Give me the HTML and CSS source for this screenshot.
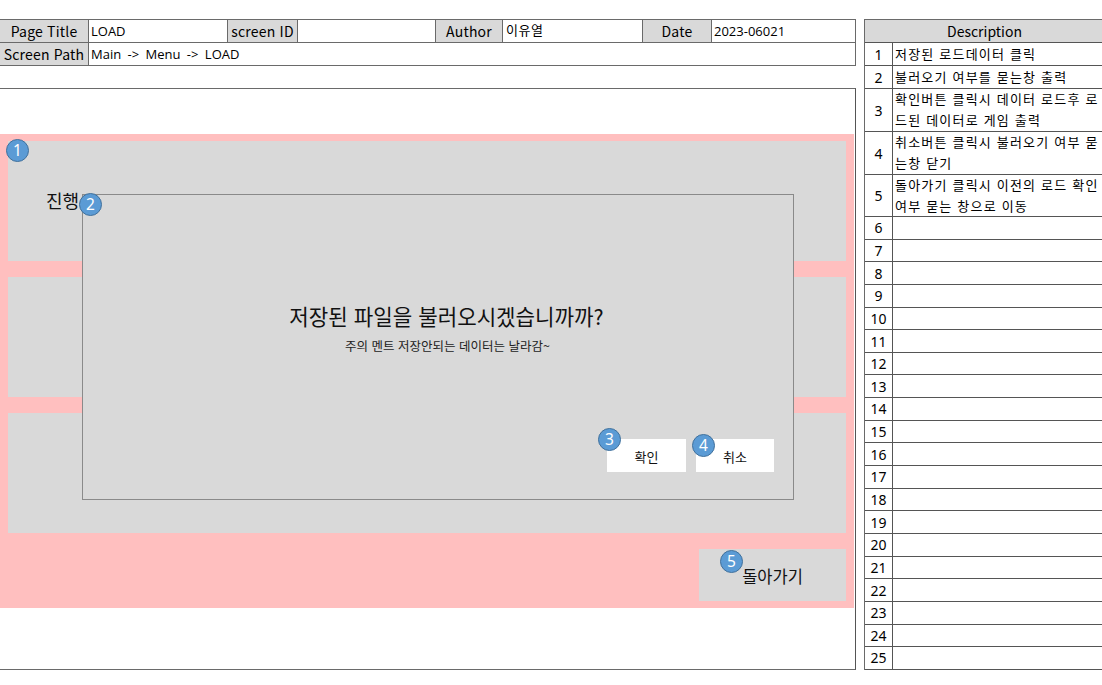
FILE: index.html
```html
<!DOCTYPE html>
<html lang="ko">
<head>
<meta charset="utf-8">
<title>LOAD</title>
<link rel="stylesheet" href="styles.css">
</head>
<body>
<div class="page">
  <div class="left">
    <div class="hdr">
      <div class="hrow">
        <div class="hc lab w89">Page Title</div>
        <div class="hc val w139">LOAD</div>
        <div class="hc lab w70">screen ID</div>
        <div class="hc val w138"></div>
        <div class="hc lab w67">Author</div>
        <div class="hc val w140 top">이유열</div>
        <div class="hc lab w69">Date</div>
        <div class="hc val grow">2023-06021</div>
      </div>
      <div class="hrow">
        <div class="hc lab w89">Screen Path</div>
        <div class="hc val grow path">Main -&gt; Menu -&gt; LOAD</div>
      </div>
    </div>
    <div class="frame">
      <div class="pink">
        <div class="slot">
          <div class="slot-text">진행</div>
        </div>
        <div class="slot"></div>
        <div class="slot"></div>
        <div class="back-row">
          <div class="back">돌아가기</div>
        </div>
      </div>
      <div class="dialog">
        <div class="d-title">저장된 파일을 불러오시겠습니까까?</div>
        <div class="d-sub">주의 멘트 저장안되는 데이터는 날라감~</div>
        <div class="d-btns">
          <div class="btn b1">확인</div>
          <div class="btn b2">취소</div>
        </div>
      </div>
      <span class="badge bd1">1</span>
      <span class="badge bd2">2</span>
      <span class="badge bd3">3</span>
      <span class="badge bd4">4</span>
      <span class="badge bd5">5</span>
    </div>
  </div>
  <div class="desc">
    <div class="drow head">Description</div>
    <div class="drow h23"><div class="num">1</div><div class="txt">저장된 로드데이터 클릭</div></div>
    <div class="drow h23"><div class="num">2</div><div class="txt">불러오기 여부를 묻는창 출력</div></div>
    <div class="drow h43"><div class="num">3</div><div class="txt">확인버튼 클릭시 데이터 로드후 로<br>드된 데이터로 게임 출력</div></div>
    <div class="drow h43"><div class="num">4</div><div class="txt">취소버튼 클릭시 불러오기 여부 묻<br>는창 닫기</div></div>
    <div class="drow h42"><div class="num">5</div><div class="txt">돌아가기 클릭시 이전의 로드 확인<br>여부 묻는 창으로 이동</div></div>
    <div class="drow hs"><div class="num">6</div><div class="txt"></div></div>
    <div class="drow hs"><div class="num">7</div><div class="txt"></div></div>
    <div class="drow hs"><div class="num">8</div><div class="txt"></div></div>
    <div class="drow hs"><div class="num">9</div><div class="txt"></div></div>
    <div class="drow hs"><div class="num">10</div><div class="txt"></div></div>
    <div class="drow hs"><div class="num">11</div><div class="txt"></div></div>
    <div class="drow hs"><div class="num">12</div><div class="txt"></div></div>
    <div class="drow hs"><div class="num">13</div><div class="txt"></div></div>
    <div class="drow hs"><div class="num">14</div><div class="txt"></div></div>
    <div class="drow hs"><div class="num">15</div><div class="txt"></div></div>
    <div class="drow hs"><div class="num">16</div><div class="txt"></div></div>
    <div class="drow hs"><div class="num">17</div><div class="txt"></div></div>
    <div class="drow hs"><div class="num">18</div><div class="txt"></div></div>
    <div class="drow hs"><div class="num">19</div><div class="txt"></div></div>
    <div class="drow hs"><div class="num">20</div><div class="txt"></div></div>
    <div class="drow hs"><div class="num">21</div><div class="txt"></div></div>
    <div class="drow hs"><div class="num">22</div><div class="txt"></div></div>
    <div class="drow hs"><div class="num">23</div><div class="txt"></div></div>
    <div class="drow hs"><div class="num">24</div><div class="txt"></div></div>
    <div class="drow hs"><div class="num">25</div><div class="txt"></div></div>
  </div>
</div>
</body>
</html>
```
FILE: styles.css
```css
* { box-sizing: border-box; }
html, body { margin: 0; padding: 0; background: #fff; }
body {
  font-family: "Noto Sans CJK KR", "Noto Sans", sans-serif;
  color: #000;
  overflow: hidden;
  width: 1102px;
  height: 685px;
}
.page {
  display: flex;
  gap: 8px;
  padding-top: 19px;
  margin-left: -1px;
}
.left {
  width: 857px;
  flex: none;
  display: flex;
  flex-direction: column;
}
.hdr {
  border-top: 1px solid #6a6a6a;
  border-left: 1px solid #6a6a6a;
  border-right: 1px solid #6a6a6a;
}
.hrow {
  display: flex;
  height: 23px;
  border-bottom: 1px solid #6a6a6a;
}
.hc {
  height: 22px;
  border-right: 1px solid #6a6a6a;
  display: flex;
  align-items: center;
  white-space: nowrap;
  overflow: hidden;
}
.hc:last-child { border-right: none; }
.lab {
  background: #d9d9d9;
  justify-content: center;
  font-size: 14px;
  letter-spacing: 0.2px;
}
.val {
  font-family: "Open Sans", "Noto Sans CJK KR", sans-serif;
  font-size: 13px;
  padding-left: 2px;
  padding-bottom: 1px;
}
.val.path { word-spacing: 3px; }
.val.top {
  font-family: "Noto Sans CJK KR", sans-serif;
  align-items: flex-start;
  padding-top: 0;
  font-size: 13px;
  padding-left: 3px;
  letter-spacing: 0.5px;
}
.w89 { width: 89px; }
.w139 { width: 139px; }
.w70 { width: 70px; }
.w138 { width: 138px; }
.w67 { width: 67px; }
.w140 { width: 140px; }
.w69 { width: 69px; }
.grow { flex: 1; }

.frame {
  margin-top: 22px;
  height: 582px;
  border-top: 1px solid #6a6a6a;
  border-right: 1px solid #555;
  border-bottom: 1px solid #6a6a6a;
  border-left: 1px solid #6a6a6a;
  padding-top: 45px;
  position: relative;
}
.pink {
  background: #ffbfbf;
  width: 854px;
  height: 474px;
  padding: 7px 8px 6px 8px;
  display: flex;
  flex-direction: column;
  gap: 16px;
}
.slot {
  background: #d9d9d9;
  height: 120px;
  flex: none;
  position: relative;
  overflow: hidden;
}
.slot-text {
  font-size: 18px;
  padding: 46px 0 0 38px;
  white-space: nowrap;
  color: #111;
}
.back-row {
  display: flex;
  justify-content: flex-end;
}
.back {
  width: 147px;
  height: 52px;
  background: #d9d9d9;
  display: flex;
  align-items: center;
  justify-content: center;
  padding-top: 2px;
  padding-left: 0;
  font-size: 16.5px;
  color: #111;
}

.dialog {
  position: absolute;
  left: 82px;
  top: 105px;
  width: 712px;
  height: 306px;
  background: #d9d9d9;
  border: 1px solid #8a8a8a;
  display: flex;
  flex-direction: column;
  align-items: center;
}
.d-title {
  margin-top: 105px;
  font-size: 21.2px;
  line-height: 32px;
  color: #111;
  padding-left: 17px;
}
.d-sub {
  margin-top: 5px;
  font-size: 12.5px;
  line-height: 18px;
  color: #222;
  padding-left: 19px;
}
.d-btns {
  align-self: flex-end;
  margin-top: 84px;
  margin-right: 19px;
  display: flex;
  gap: 10px;
}
.btn {
  background: #fff;
  width: 79px;
  height: 33px;
  display: flex;
  align-items: center;
  justify-content: center;
  font-size: 13px;
  padding-top: 2px;
  color: #111;
}
.btn.b2 { width: 78px; }

.badge {
  position: absolute;
  width: 23px;
  height: 23px;
  border-radius: 50%;
  background: #5b9bd5;
  border: 1.5px solid #41719c;
  color: #fff;
  font-family: "Noto Sans", "Open Sans", sans-serif;
  font-size: 15.5px;
  line-height: 20px;
  text-align: center;
}
.bd1 { left: 6px; top: 50px; }
.bd2 { left: 79px; top: 104px; }
.bd3 { left: 598px; top: 339px; }
.bd4 { left: 692px; top: 345px; }
.bd5 { left: 720px; top: 461px; }

.desc {
  width: 241px;
  flex: none;
  border-top: 1px solid #6a6a6a;
  border-left: 1px solid #6a6a6a;
  border-right: 1px solid #6a6a6a;
}
.drow {
  display: flex;
  border-bottom: 1px solid #555;
  font-size: 13px;
}
.drow.head {
  height: 23px;
  background: #d9d9d9;
  justify-content: center;
  align-items: center;
  font-size: 14px;
}
.h23 { height: 23px; }
.h43 { height: 43px; }
.h42 { height: 42px; }
.hs { height: 22.65px; }
.num {
  width: 28px;
  flex: none;
  border-right: 1px solid #555;
  display: flex;
  align-items: center;
  justify-content: center;
  font-family: "Noto Sans", "Open Sans", sans-serif;
  font-size: 14px;
}
.txt {
  flex: 1;
  padding-left: 2px;
  padding-bottom: 2px;
  display: flex;
  align-items: center;
  line-height: 21px;
  letter-spacing: 1.2px;
  white-space: nowrap;
  overflow: hidden;
}
```
